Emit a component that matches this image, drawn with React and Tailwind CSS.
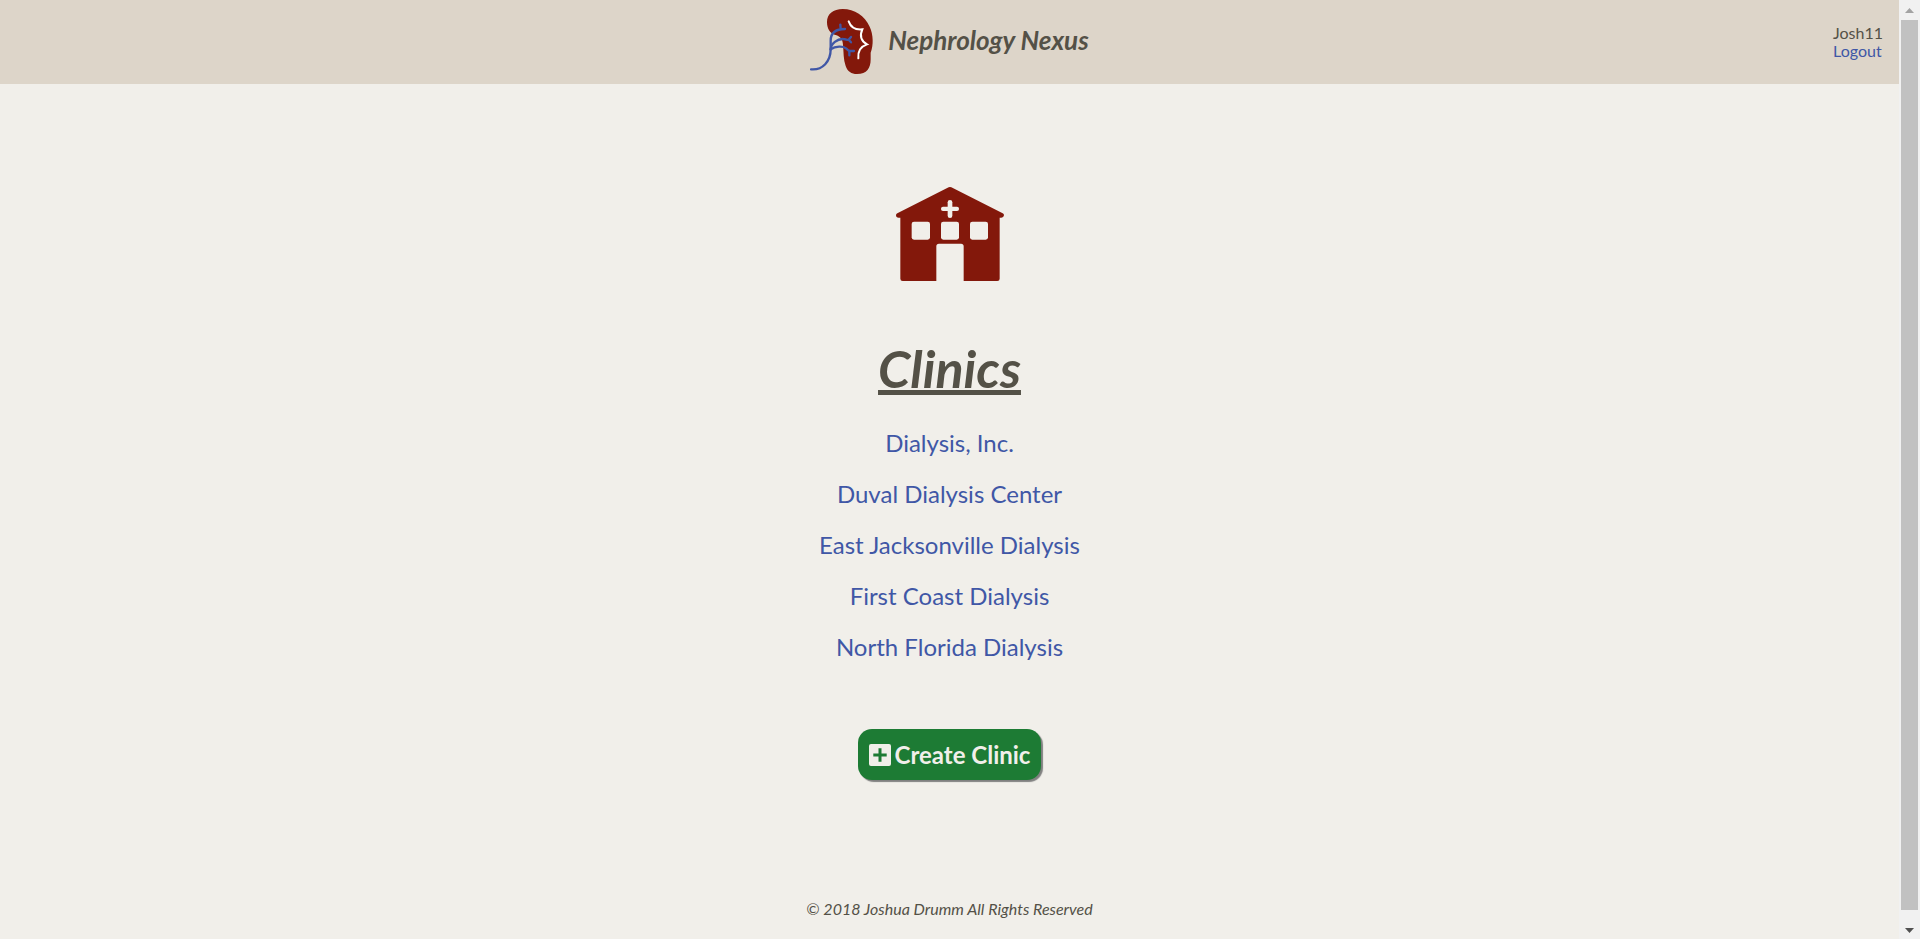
const clinics = [
  'Dialysis, Inc.',
  'Duval Dialysis Center',
  'East Jacksonville Dialysis',
  'First Coast Dialysis',
  'North Florida Dialysis',
];

function KidneyLogo() {
  return (
    <svg viewBox="30 24 192 201" className="h-[67px] w-16" fill="none" strokeLinecap="round" aria-hidden="true">
      <path
        d="M128 27C100 27 81 42 81 66C81 86 90 99 104 104C120 108 128 116 129 134C131 156 130 178 137 198C143 215 154 222 171 222C201 222 212 205 212 178V158C221 135 220 104 209 80C194 47 164 27 128 27Z"
        fill="#83180b"
      />
      <g stroke="#4057a6" strokeWidth="7" strokeLinejoin="round">
        <path d="M33 208C68 211 92 184 92 148V122C92 101 105 87 135 87M122 87L121 74" />
        <path d="M92 148C93 130 112 116 130 117C138 117 142 121 146 119L153 111M146 119L153 127" />
        <path d="M92 148C107 138 129 138 138 145C143 150 146 153 150 153H162M148 154V166" />
      </g>
      <path d="M146 64C153 84 167 90 187 88C179 106 182 122 201 133C183 139 173 154 175 175" stroke="#fff" strokeWidth="6" strokeLinejoin="miter" />
    </svg>
  );
}

function ClinicIcon() {
  return (
    <svg viewBox="75 48 324 288" className="h-24 w-[108px]" aria-hidden="true">
      <path
        d="M233 52Q237 50 241 52L395 130Q399 132 399 136Q398 143 391 143H386V326Q386 333 379 333H278V229Q278 221 270 221H204Q196 221 196 229V333H95Q88 333 88 326V143H83Q75 143 75 136Q75 132 79 130Z"
        fill="#83180b"
      />
      <g fill="#f1efea">
        <rect x="122" y="155" width="55" height="54" rx="7" />
        <rect x="210" y="155" width="54" height="54" rx="7" />
        <rect x="297" y="155" width="54" height="54" rx="7" />
        <rect x="230" y="90" width="14" height="54" rx="7" />
        <rect x="210" y="110" width="54" height="13" rx="6" />
      </g>
    </svg>
  );
}

function PlusSquare() {
  return (
    <svg viewBox="0 0 22 22" className="size-[22px]" aria-hidden="true">
      <path
        fillRule="evenodd"
        fill="#f1efea"
        d="M2 0H20Q22 0 22 2V20Q22 22 20 22H2Q0 22 0 20V2Q0 0 2 0ZM9.500 4.300V9.500H4.300V12.500H9.500V17.700H12.500V12.500H17.700V9.500H12.500V4.300Z"
      />
    </svg>
  );
}

function ScrollTrack() {
  return (
    <div className="flex w-[21px] shrink-0 flex-col items-center justify-between bg-[#f1f1f1]" aria-hidden="true">
      <svg viewBox="0 0 17 20" className="h-5 w-[17px]"><path d="M4 13L8.500 8L13 13Z" fill="#a3a3a3" /></svg>
      <div className="w-[17px] grow bg-[#c1c1c1]" />
      <svg viewBox="0 0 17 29" className="h-[29px] w-[17px]"><path d="M4 18H13L8.500 23Z" fill="#505050" /></svg>
    </div>
  );
}

export default function App() {
  return (
    <div className="flex min-h-screen bg-[#f1efea] font-['Lato',sans-serif] text-[#545147]">
      <div className="flex grow flex-col">
        <header className="grid h-[84px] grid-cols-[1fr_auto_1fr] items-center bg-[#ddd5c9]">
          <a href="#home" className="col-start-2 flex items-center gap-3.5 pb-0.5">
            <KidneyLogo />
            <span className="pb-0.5 text-[26px] leading-8 font-bold italic">Nephrology Nexus</span>
          </a>
          <div className="mr-4 flex flex-col justify-self-end text-base leading-[18px]">
            <span>Josh11</span>
            <a href="#logout" className="text-[#4057a6]">Logout</a>
          </div>
        </header>
        <main className="flex flex-col items-center pt-[102px]">
          <ClinicIcon />
          <h1 className="mt-14 text-[52px] leading-[60px] font-bold italic underline decoration-[5px] underline-offset-[2px] [text-decoration-skip-ink:none]">
            Clinics
          </h1>
          <ul className="mt-[19px] flex flex-col items-center text-center text-2xl leading-[51px] text-[#4057a6]">
            {clinics.map((name) => (
              <li key={name}>
                <a href="#clinic">{name}</a>
              </li>
            ))}
          </ul>
          <button
            type="button"
            className="mt-[57px] flex h-[51px] items-center gap-1 rounded-[14px] bg-[#1d7b34] px-[11px] text-2xl leading-8 font-bold text-[#f1efea] shadow-[2px_2px_1px_#808080]"
          >
            <PlusSquare />
            Create Clinic
          </button>
        </main>
        <footer className="mt-auto pb-5 text-center text-base leading-5 italic">© 2018 Joshua Drumm All Rights Reserved</footer>
      </div>
      <ScrollTrack />
    </div>
  );
}
